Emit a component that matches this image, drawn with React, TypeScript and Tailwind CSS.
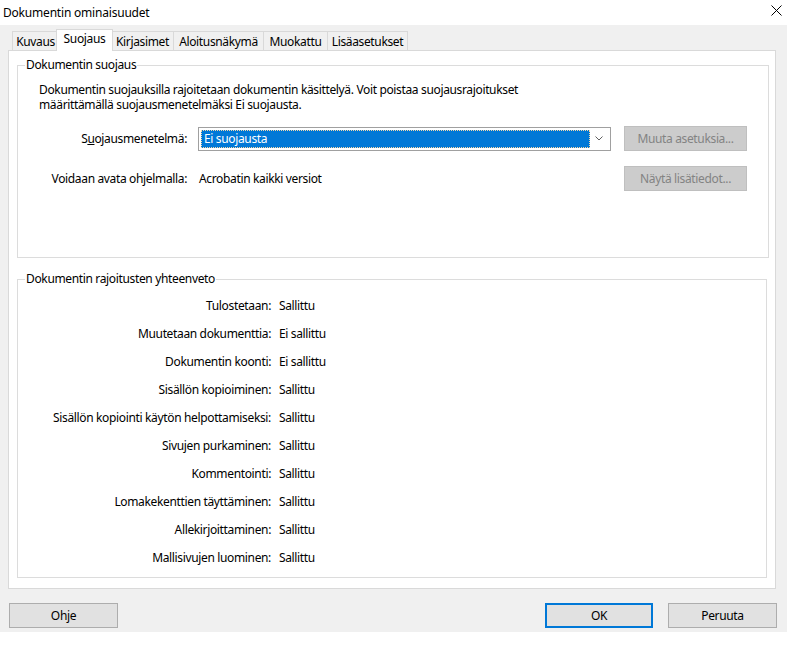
import React from "react";

const rows: [string, string][] = [
  ["Tulostetaan:", "Sallittu"],
  ["Muutetaan dokumenttia:", "Ei sallittu"],
  ["Dokumentin koonti:", "Ei sallittu"],
  ["Sisällön kopioiminen:", "Sallittu"],
  ["Sisällön kopiointi käytön helpottamiseksi:", "Sallittu"],
  ["Sivujen purkaminen:", "Sallittu"],
  ["Kommentointi:", "Sallittu"],
  ["Lomakekenttien täyttäminen:", "Sallittu"],
  ["Allekirjoittaminen:", "Sallittu"],
  ["Mallisivujen luominen:", "Sallittu"],
];

const tabs = [
  { label: "Kuvaus", w: "w-[47px]" },
  { label: "Suojaus", w: "w-[57px]", active: true },
  { label: "Kirjasimet", w: "w-[63px]" },
  { label: "Aloitusnäkymä", w: "w-[91px]" },
  { label: "Muokattu", w: "w-[65px]" },
  { label: "Lisäasetukset", w: "w-[81px]" },
];

function Tab({ label, w, active }: { label: string; w: string; active?: boolean }) {
  if (active) {
    return (
      <div className={`${w} h-[22px] -mx-[2px] -mb-px relative z-10 bg-white border border-b-0 border-[#d9d9d9] flex items-start justify-center pt-[1px]`}>
        {label}
      </div>
    );
  }
  return (
    <div className={`${w} h-[19px] -mr-px bg-[#f0f0f0] border border-b-0 border-[#d9d9d9] flex items-center justify-center`}>
      {label}
    </div>
  );
}

function Button({ children, disabled, primary, className }: { children: React.ReactNode; disabled?: boolean; primary?: boolean; className?: string }) {
  return (
    <div
      className={[
        "h-[25px] flex items-center justify-center",
        disabled
          ? "bg-[#cccccc] border border-[#bfbfbf] text-[#838383]"
          : primary
          ? "bg-[#e1e1e1] border-2 border-[#0078d7]"
          : "bg-[#e1e1e1] border border-[#adadad]",
        className || "",
      ].join(" ")}
    >
      {children}
    </div>
  );
}

export default function App() {
  return (
    <div className="w-[800px] h-[648px] bg-white text-black text-[12px] leading-[15px] tracking-[-0.35px] overflow-hidden" style={{ fontFamily: '"Noto Sans", "Liberation Sans", sans-serif' }}>
      {/* title bar */}
      <div className="h-[25px] flex items-center justify-between pl-[3px] pr-[18px]">
        <span className="text-[12px] tracking-[-0.2px]">Dokumentin ominaisuudet</span>
        <svg width="11" height="11" viewBox="0 0 11 11" className="mt-[-4px]">
          <path d="M0.5 0.5 L10.5 10.5 M10.5 0.5 L0.5 10.5" stroke="#000" strokeWidth="1" fill="none" />
        </svg>
      </div>

      {/* dialog body */}
      <div className="w-[787px] h-[607px] bg-[#f0f0f0] pt-[4px] pl-[8px]">
        <div className="flex items-end pl-[4px] h-[21px]">
          {tabs.map((t) => (
            <Tab key={t.label} {...t} />
          ))}
        </div>

        <div className="w-[768px] h-[539px] bg-white border border-[#d9d9d9] px-[8px] pt-[6px]">
          {/* group 1 */}
          <fieldset className="border border-[#dcdcdc] h-[201px] px-[21px]">
            <legend className="ml-[-14px] px-[1px] leading-[16px]">Dokumentin suojaus</legend>
            <div className="pt-[9px] leading-[15px]">
              <div className="h-[15px]">Dokumentin suojauksilla rajoitetaan dokumentin käsittelyä. Voit poistaa suojausrajoitukset</div>
              <div className="h-[15px]">määrittämällä suojausmenetelmäksi Ei suojausta.</div>
            </div>

            <div className="flex items-center mt-[14px] ml-[-21px]">
              <div className="w-[169px] text-right">
                S<span className="underline">u</span>ojausmenetelmä:
              </div>
              <div className="ml-[11px] w-[413px] h-[24px] border border-[#a0a0a0] bg-white flex items-center p-[2px]">
                <div className="flex-1 h-full bg-[#0078d7] text-white border border-dotted border-[#f5d7a8] flex items-center pl-[2px]">
                  Ei suojausta
                </div>
                <div className="w-[18px] flex items-center justify-center">
                  <svg width="8" height="5" viewBox="0 0 8 5">
                    <path d="M0.5 0.5 L4 4 L7.5 0.5" stroke="#606060" strokeWidth="1" fill="none" />
                  </svg>
                </div>
              </div>
              <Button disabled className="ml-[13px] w-[123px]">
                Muuta asetuksia...
              </Button>
            </div>

            <div className="flex items-center mt-[15px] ml-[-21px]">
              <div className="w-[169px] text-right">Voidaan avata ohjelmalla:</div>
              <div className="ml-[12px] w-[412px]">Acrobatin kaikki versiot</div>
              <Button disabled className="ml-[13px] w-[123px]">
                Näytä lisätiedot...
              </Button>
            </div>
          </fieldset>

          {/* group 2 */}
          <fieldset className="border border-[#dcdcdc] h-[307px] mt-[13px]">
            <legend className="ml-[7px] px-[1px] leading-[16px]">Dokumentin rajoitusten yhteenveto</legend>
            <div className="pt-[4px]">
              {rows.map(([k, v]) => (
                <div key={k} className="flex items-center h-[28px]">
                  <div className="w-[253px] text-right">{k}</div>
                  <div className="ml-[8px]">{v}</div>
                </div>
              ))}
            </div>
          </fieldset>
        </div>

        <div className="flex mt-[14px] w-[769px]">
          <Button className="w-[109px] ml-[1px]">Ohje</Button>
          <Button primary className="w-[108px] ml-auto">OK</Button>
          <Button className="w-[109px] ml-[15px]">Peruuta</Button>
        </div>
      </div>
    </div>
  );
}
